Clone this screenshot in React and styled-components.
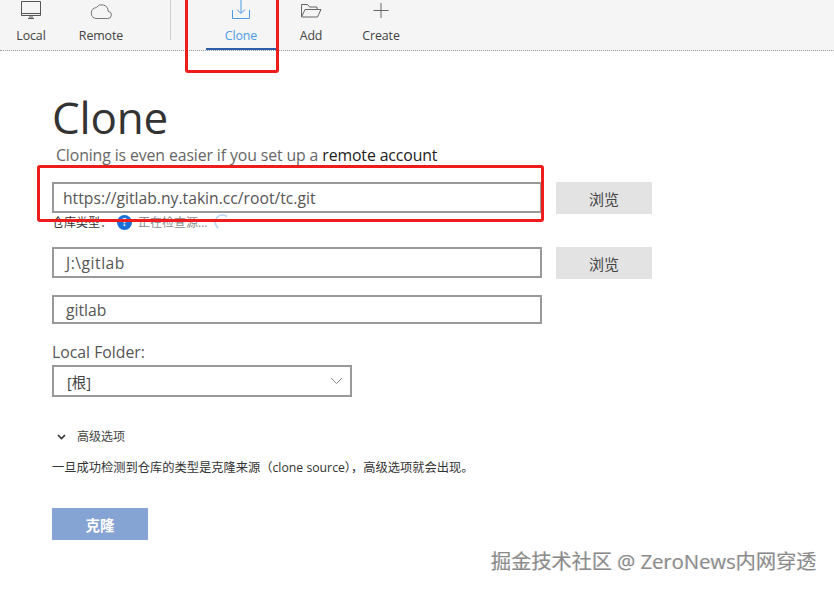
import React from "react";
import styled, { createGlobalStyle } from "styled-components";

const FONT = `"Open Sans", "Noto Sans CJK SC", sans-serif`;

const Global = createGlobalStyle`
  html, body { margin: 0; padding: 0; background: #fff; }
  body { width: 834px; height: 589px; overflow: hidden; font-family: ${FONT}; }
  * { box-sizing: border-box; }
`;

const Page = styled.div`
  position: relative;
  width: 834px;
  height: 589px;
  overflow: hidden;
`;

const Toolbar = styled.div`
  display: flex;
  height: 51px;
  background: #f5f5f5;
  border-bottom: 1px dotted #999;
`;

const ToolGroup = styled.div`
  display: flex;
  width: ${(p) => p.$width}px;
`;

const Divider = styled.div`
  width: 1px;
  height: 40px;
  background: #cfcfcf;
  margin-right: 35px;
`;

const ToolItem = styled.div`
  width: ${(p) => p.$width}px;
  height: 50px;
  display: flex;
  flex-direction: column;
  align-items: center;
  color: ${(p) => (p.$active ? "#4b9be8" : "#444")};
  font-size: 12.4px;
  letter-spacing: -0.1px;
  border-bottom: ${(p) => (p.$active ? "2px solid #2a5ea8" : "none")};
`;

const ToolIcon = styled.div`
  height: 20px;
  display: flex;
  align-items: flex-end;
  justify-content: center;
`;

const ToolLabel = styled.div`
  line-height: 16px;
  margin-top: 8px;
`;

const Content = styled.main`
  padding: 38px 0 0 52px;
  width: 700px;
`;

const Title = styled.h1`
  margin: 0;
  font-size: 44px;
  font-weight: 400;
  line-height: 56px;
  color: #333;
  letter-spacing: -0.2px;
`;

const Subtitle = styled.p`
  margin: 0 0 0 4px;
  font-size: 15.8px;
  line-height: 20px;
  color: #666;
  letter-spacing: -0.1px;
  strong { font-weight: 400; color: #222; }
`;

const Row = styled.div`
  display: flex;
  align-items: flex-start;
  gap: 14px;
  margin-top: ${(p) => p.$top}px;
`;

const Field = styled.div`
  width: 490px;
  height: ${(p) => p.$height || 31}px;
  flex: none;
  border: 2px solid #999;
  background: #fff;
  display: flex;
  align-items: center;
  padding-left: ${(p) => p.$pad || 12}px;
  font-size: 15.7px;
  letter-spacing: ${(p) => p.$track || 0}px;
  color: #555;
`;

const Browse = styled.button`
  width: 96px;
  height: 32px;
  flex: none;
  border: 0;
  background: #e3e3e3;
  color: #444;
  font-family: ${FONT};
  font-size: 15px;
`;

const Status = styled.div`
  display: flex;
  align-items: center;
  height: 18px;
  margin-top: -1px;
  font-size: 12px;
  color: #333;
`;

const StatusDot = styled.span`
  width: 15px;
  height: 15px;
  margin-left: 5px;
  margin-right: 6px;
  border-radius: 50%;
  background: #1a6fd8;
  color: #fff;
  font-size: 10px;
  font-weight: 700;
  line-height: 15px;
  text-align: center;
`;

const StatusText = styled.span`
  color: #8a8a8a;
`;

const Spinner = styled.svg`
  margin-left: 6px;
`;

const FieldLabel = styled.div`
  margin-top: 18px;
  font-size: 15.8px;
  line-height: 20px;
  color: #555;
`;

const Select = styled.div`
  width: 300px;
  height: 32px;
  margin-top: 3px;
  border: 2px solid #999;
  display: flex;
  align-items: center;
  justify-content: space-between;
  padding: 0 7px 0 13px;
  font-size: 14.5px;
  color: #444;
`;

const Advanced = styled.div`
  display: flex;
  align-items: center;
  gap: 11px;
  margin: 31px 0 0 5px;
  font-size: 12px;
  line-height: 18px;
  color: #444;
`;

const Note = styled.p`
  margin: 13px 0 0;
  font-size: 12.25px;
  line-height: 18px;
  color: #333;
  white-space: nowrap;
`;

const Submit = styled.button`
  display: block;
  width: 96px;
  height: 32px;
  margin-top: 31px;
  border: 0;
  background: #85a3d3;
  color: #fff;
  font-family: ${FONT};
  font-size: 14.5px;
  font-weight: 600;
`;

const Highlight = styled.div`
  position: absolute;
  left: ${(p) => p.$x}px;
  top: ${(p) => p.$y}px;
  width: ${(p) => p.$w}px;
  height: ${(p) => p.$h}px;
  border: 3px solid #ee1c1c;
  border-radius: 3px;
  pointer-events: none;
`;

const Watermark = styled.div`
  position: absolute;
  left: 491px;
  top: 547px;
  font-size: 20.2px;
  line-height: 28px;
  color: #8a8a8a;
  text-shadow: 1px 1px 0 #fff, -1px 0 0 #e0e0e0;
  white-space: nowrap;
`;

const Svg = ({ w, h, children, sw = 1 }) => (
  <svg width={w} height={h} viewBox={`0 0 ${w} ${h}`} fill="none" stroke="currentColor" strokeWidth={sw}>
    {children}
  </svg>
);

const Monitor = () => (
  <Svg w={22} h={20}>
    <path d="M1.5 1.5h19v14h-19z" stroke="#555" />
    <path d="M1.5 13.5h19M8 18.5h6M10 16v2M12 16v2" stroke="#555" />
  </Svg>
);
const Cloud = () => (
  <Svg w={22} h={19}>
    <path d="M6 17.5h11.5a3.6 3.6 0 0 0 .6-7.2A6.5 6.5 0 0 0 6.2 6.6 5.5 5.5 0 0 0 6 17.5z" stroke="#777" />
  </Svg>
);
const Download = () => (
  <Svg w={20} h={20}>
    <path d="M1.5 10v8.5h17V10M10 0v13M6 9.5l4 4 4-4" stroke="#4b9be8" />
  </Svg>
);
const Folder = () => (
  <Svg w={22} h={18}>
    <path d="M1.5 15V2.5h6l2 2.5h7.5v2.5M1.5 15l3.5-7.5h16L17.5 15z" stroke="#666" />
  </Svg>
);
const Plus = () => (
  <Svg w={18} h={20}>
    <path d="M9 3v15M1.5 10.5h15" stroke="#666" />
  </Svg>
);

export default function App() {
  return (
    <Page>
      <Global />
      <Toolbar>
        <ToolGroup $width={170}>
          <ToolItem $width={62}>
            <ToolIcon><Monitor /></ToolIcon>
            <ToolLabel>Local</ToolLabel>
          </ToolItem>
          <ToolItem $width={78}>
            <ToolIcon><Cloud /></ToolIcon>
            <ToolLabel>Remote</ToolLabel>
          </ToolItem>
        </ToolGroup>
        <Divider />
        <ToolItem $width={70} $active>
          <ToolIcon><Download /></ToolIcon>
          <ToolLabel>Clone</ToolLabel>
        </ToolItem>
        <ToolItem $width={70}>
          <ToolIcon><Folder /></ToolIcon>
          <ToolLabel>Add</ToolLabel>
        </ToolItem>
        <ToolItem $width={70}>
          <ToolIcon><Plus /></ToolIcon>
          <ToolLabel>Create</ToolLabel>
        </ToolItem>
      </Toolbar>
      <Content>
        <Title>Clone</Title>
        <Subtitle>Cloning is even easier if you set up a <strong>remote account</strong></Subtitle>
        <Row $top={17}>
          <Field $pad={9}>https://gitlab.ny.takin.cc/root/tc.git</Field>
          <Browse>浏览</Browse>
        </Row>
        <Status>
          仓库类型：
          <StatusDot>?</StatusDot>
          <StatusText>正在检查源...</StatusText>
          <Spinner width="16" height="16" viewBox="0 0 16 16" fill="none">
            <path d="M14 2.5A7 7 0 0 0 5 14" stroke="#b9d4f2" strokeWidth="1.6" />
          </Spinner>
        </Status>
        <Row $top={16}>
          <Field $track={0.5}>J:\gitlab</Field>
          <Browse>浏览</Browse>
        </Row>
        <Row $top={16}>
          <Field $height={29}>gitlab</Field>
        </Row>
        <FieldLabel>Local Folder:</FieldLabel>
        <Select>
          [根]
          <svg width="13" height="8" viewBox="0 0 13 8" fill="none">
            <path d="M1 1l5.5 5.5L12 1" stroke="#888" />
          </svg>
        </Select>
        <Advanced>
          <svg width="9" height="6" viewBox="0 0 9 6" fill="none">
            <path d="M1 1l3.5 3.5L8 1" stroke="#333" strokeWidth="1.6" />
          </svg>
          高级选项
        </Advanced>
        <Note>一旦成功检测到仓库的类型是克隆来源（clone source），高级选项就会出现。</Note>
        <Submit>克隆</Submit>
      </Content>
      <Highlight $x={185} $y={-4} $w={94} $h={77} />
      <Highlight $x={37} $y={165} $w={507} $h={57} />
      <Watermark>掘金技术社区 @ ZeroNews内网穿透</Watermark>
    </Page>
  );
}
